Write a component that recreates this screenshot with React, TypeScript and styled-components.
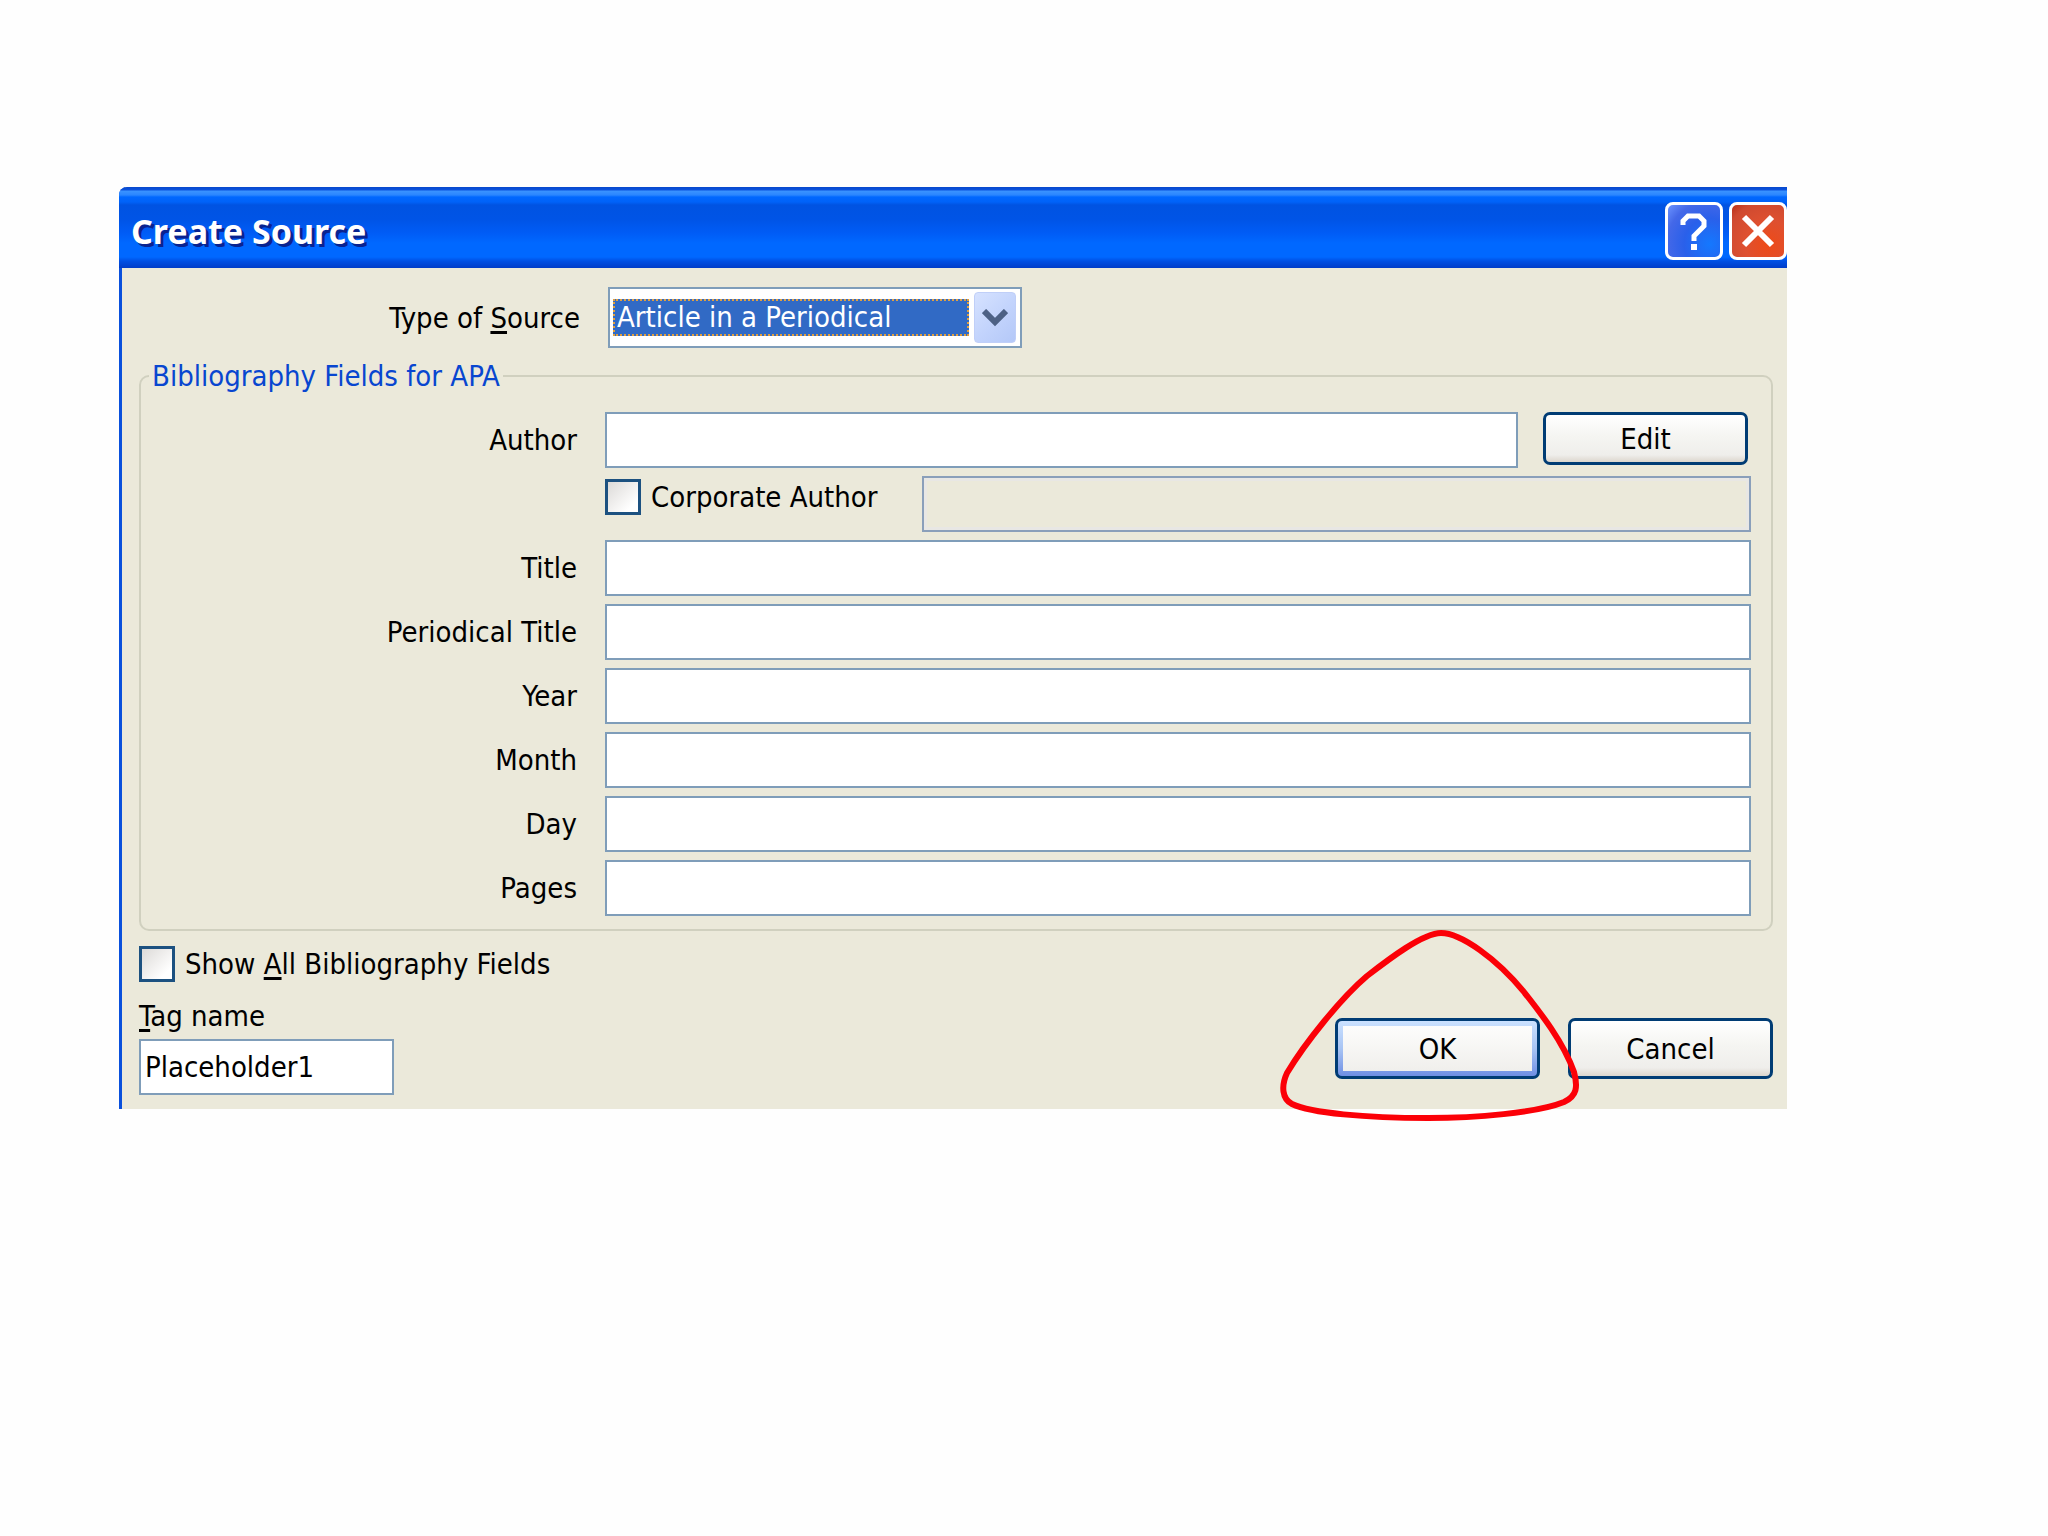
import React from "react";
import styled, { createGlobalStyle, css } from "styled-components";

const GlobalStyle = createGlobalStyle`
  *, *::before, *::after { box-sizing: border-box; }
  body {
    margin: 0;
    background: #fefefe;
    color: #000;
    font-family: "DejaVu Sans Condensed", "DejaVu Sans", Tahoma, sans-serif;
    font-size: 29px;
    line-height: 36px;
  }
  button, input, select { font: inherit; color: inherit; margin: 0; }
`;

const Page = styled.main`
  padding: 187px 261px 187px 119px;
`;

const Dialog = styled.section`
  background: #ebe9da;
  border-left: 3px solid #0a50dc;
  border-top-left-radius: 8px;
`;

const TitleBar = styled.header`
  display: flex;
  align-items: center;
  gap: 6px;
  height: 81px;
  margin-left: -3px;
  padding: 6px 0 0 12px;
  border-top-left-radius: 8px;
  background: linear-gradient(
    to bottom,
    #0848cc 0,
    #0a52de 3px,
    #3a93ff 4px,
    #2a86ff 8px,
    #0068ff 10px,
    #0062f8 15px,
    #0053e2 18px,
    #0054e6 32px,
    #005cf6 46px,
    #0068ff 56px,
    #0068ff 70px,
    #0050e4 74px,
    #003cc8 81px
  );
`;

const Title = styled.h1`
  flex: 1;
  margin: 0;
  color: #fff;
  font-family: "Noto Sans", "Open Sans", sans-serif;
  font-size: 34px;
  font-weight: 700;
  line-height: 44px;
  text-shadow: 3px 3px 0 #0a2390;
`;

const CaptionButton = styled.button<{ $close?: boolean }>`
  display: flex;
  align-items: center;
  justify-content: center;
  width: 58px;
  height: 58px;
  padding: 0;
  border: 3px solid #fff;
  border-radius: 8px;
  background: ${({ $close }) =>
    $close
      ? "radial-gradient(circle at 70% 75%, #ee4a18 0, #de5030 45%, #cf4a30 80%, #b83018 100%)"
      : "radial-gradient(circle at 80% 75%, #1478ff 0, #2a60ea 45%, #4468e8 75%, #6c94ff 100%)"};
`;

const Body = styled.form`
  padding: 19px 14px 14px 17px;
`;

const TypeRow = styled.div`
  display: flex;
  align-items: center;
  gap: 28px;
`;

const Label = styled.label<{ $width: number }>`
  flex: 0 0 ${({ $width }) => $width}px;
  text-align: right;
`;

const Combo = styled.div`
  display: flex;
  align-items: center;
  gap: 5px;
  width: 414px;
  height: 61px;
  padding: 3px 4px 3px 3px;
  border: 2px solid #7f9db9;
  background: #fff;
`;

const Select = styled.select`
  appearance: none;
  flex: 1;
  min-width: 0;
  height: 37px;
  padding: 0 2px;
  border: 2px dotted #e0a040;
  border-radius: 0;
  outline: none;
  background: #316ac5;
  color: #fff;
  line-height: 33px;
`;

const ComboArrow = styled.span`
  display: flex;
  align-items: center;
  justify-content: center;
  width: 42px;
  height: 51px;
  border: 1px solid #c0cff8;
  border-radius: 4px;
  background: linear-gradient(135deg, #d6e2ff 0, #c2d3fc 55%, #b4c8f8 100%);
`;

const Group = styled.fieldset`
  min-width: 0;
  margin: 10px 0 0;
  padding: 18px 20px 13px 0;
  border: 2px solid #d0d0bf;
  border-radius: 10px;
`;

const Legend = styled.legend`
  margin-left: 8px;
  padding: 0 3px;
  color: #0846d0;
`;

const Fields = styled.div`
  display: flex;
  flex-direction: column;
  gap: 8px;
`;

const Row = styled.div`
  display: flex;
  align-items: center;
  gap: 28px;
  height: 56px;
`;

const Controls = styled.div`
  display: flex;
  flex: 1;
  align-items: center;
  gap: 25px;
`;

const TextBox = styled.input`
  flex: 1;
  min-width: 0;
  height: 56px;
  padding: 0 4px;
  border: 2px solid #7f9db9;
  border-radius: 0;
  background: #fff;

  &:disabled {
    border-color: #8a9fba;
    background: #ebe9da;
    box-shadow: inset 0 0 0 3px #e8e7e4;
  }
`;

const CheckLabel = styled.label`
  display: flex;
  align-items: center;
  gap: 10px;
`;

const CorporateLabel = styled(CheckLabel)`
  flex: 0 0 289px;
  align-self: flex-start;
  margin: 3px 0 0 464px;
`;

const Check = styled.input`
  appearance: none;
  flex: none;
  width: 36px;
  height: 36px;
  border: 3px solid #1c5180;
  background: linear-gradient(135deg, #dcdad8 0, #f2f1f0 50%, #fff 80%);
`;

const PushButton = styled.button<{ $tall?: boolean; $primary?: boolean }>`
  width: 205px;
  height: ${({ $tall }) => ($tall ? 61 : 53)}px;
  padding: 0;
  border: 3px solid #003c74;
  border-radius: 7px;
  background: linear-gradient(to bottom, #fff 0, #f5f5f2 45%, #efeeeb 85%, #dcd6cd 100%);

  ${({ $primary }) =>
    $primary &&
    css`
      background:
        linear-gradient(to bottom, #fdfdfc, #f0efec) 5px 5px / calc(100% - 10px) calc(100% - 10px) no-repeat,
        linear-gradient(to bottom, #cbe2ff 0, #a8c4f4 50%, #6f8fe4 100%);
    `}
`;

const EditButton = styled(PushButton)`
  align-self: flex-start;
  margin-right: 3px;
`;

const ShowAll = styled.div`
  display: flex;
  margin-top: 15px;
`;

const Footer = styled.div`
  display: flex;
  align-items: flex-end;
  justify-content: space-between;
  margin-top: 16px;
`;

const TagField = styled.div`
  display: flex;
  flex-direction: column;
  gap: 5px;
  width: 255px;
`;

const TagBox = styled(TextBox)`
  flex: none;
  width: 100%;
`;

const Actions = styled.div`
  display: flex;
  gap: 28px;
  margin-bottom: 16px;
`;

const Marked = styled.div`
  position: relative;
  z-index: 1;
`;

const Mark = styled.svg`
  position: absolute;
  top: -93px;
  left: -60px;
  pointer-events: none;
`;

const Key = styled.span`
  text-decoration: underline;
  text-decoration-thickness: 3px;
  text-underline-offset: 3px;
`;

const plainFields = ["Title", "Periodical Title", "Year", "Month", "Day", "Pages"];

export default function App() {
  return (
    <>
      <GlobalStyle />
      <Page>
        <Dialog role="dialog" aria-labelledby="dialog-title">
          <TitleBar>
            <Title id="dialog-title">Create Source</Title>
            <CaptionButton type="button" aria-label="Help">
              <svg width="30" height="40" viewBox="0 0 30 40" fill="none" stroke="#fff" strokeWidth="5">
                <path d="M4 14V10L9 5H20L25 10V15L15 25V30" />
                <path d="M15 33V39" strokeWidth="6" />
              </svg>
            </CaptionButton>
            <CaptionButton type="button" $close aria-label="Close">
              <svg width="34" height="34" viewBox="0 0 34 34" fill="none" stroke="#fff" strokeWidth="6">
                <path d="M3 3L31 31M31 3L3 31" />
              </svg>
            </CaptionButton>
          </TitleBar>
          <Body onSubmit={(e) => e.preventDefault()}>
            <TypeRow>
              <Label htmlFor="type" $width={441}>
                Type of <Key>S</Key>ource
              </Label>
              <Combo>
                <Select id="type">
                  <option>Article in a Periodical</option>
                </Select>
                <ComboArrow aria-hidden="true">
                  <svg width="26" height="18" viewBox="0 0 26 18" fill="none" stroke="#4d6185" strokeWidth="6">
                    <path d="M2 2L13 13L24 2" />
                  </svg>
                </ComboArrow>
              </Combo>
            </TypeRow>

            <Group>
              <Legend>Bibliography Fields for APA</Legend>
              <Fields>
                <Row>
                  <Label htmlFor="author" $width={436}>
                    Author
                  </Label>
                  <Controls>
                    <TextBox id="author" type="text" />
                    <EditButton type="button">Edit</EditButton>
                  </Controls>
                </Row>
                <Row>
                  <CorporateLabel>
                    <Check type="checkbox" />
                    Corporate Author
                  </CorporateLabel>
                  <TextBox type="text" aria-label="Corporate Author name" disabled />
                </Row>
                {plainFields.map((name) => (
                  <Row key={name}>
                    <Label htmlFor={name} $width={436}>
                      {name}
                    </Label>
                    <TextBox id={name} type="text" />
                  </Row>
                ))}
              </Fields>
            </Group>

            <ShowAll>
              <CheckLabel>
                <Check type="checkbox" />
                <span>
                  Show <Key>A</Key>ll Bibliography Fields
                </span>
              </CheckLabel>
            </ShowAll>

            <Footer>
              <TagField>
                <label htmlFor="tag">
                  <Key>T</Key>ag name
                </label>
                <TagBox id="tag" type="text" defaultValue="Placeholder1" />
              </TagField>
              <Actions>
                <Marked>
                  <PushButton type="submit" $tall $primary>
                    OK
                  </PushButton>
                  <Mark width="310" height="200" viewBox="0 0 310 200" fill="none" stroke="#fb0007" strokeWidth="6" aria-hidden="true">
                    <path d="M166 8C148 8 114 34 92 51C66 73 30 118 12 148C6 161 7 174 17 179C36 188 90 193 153 193C200 193 262 188 289 177C302 171 303 162 299 147C288 116 264 86 249 67C222 34 186 8 166 8Z" />
                  </Mark>
                </Marked>
                <PushButton type="button" $tall>
                  Cancel
                </PushButton>
              </Actions>
            </Footer>
          </Body>
        </Dialog>
      </Page>
    </>
  );
}
